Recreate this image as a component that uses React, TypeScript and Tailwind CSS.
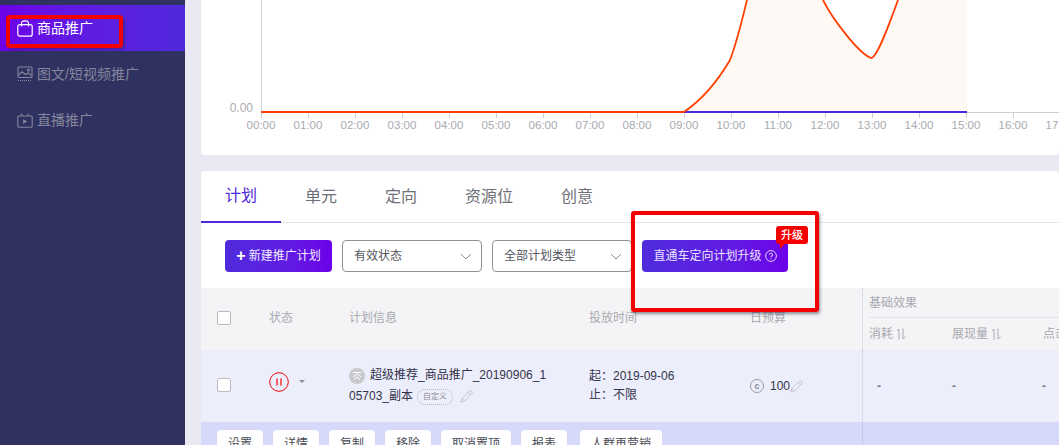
import React from "react";

const hours = Array.from({ length: 19 }, (_, i) => i);

function Chart() {
  return (
    <svg viewBox="201 0 858 155" className="block h-[155px] w-[858px]">
      <path d="M684 112 C700 101 716 84 730 60 C737 42 742 20 747 0 L823 0 C832 18 858 53 871 58 C877 58 889 25 898 0 L967 0 L967 112 Z" fill="#fff9f6" />
      <line x1="261.5" y1="0" x2="261.5" y2="113" stroke="#cfcfd3" />
      <line x1="261" y1="112.5" x2="1059" y2="112.5" stroke="#cfcfd3" />
      {hours.map((h) => (
        <line key={h} x1={261.5 + 47 * h} y1="113" x2={261.5 + 47 * h} y2="118" stroke="#cfcfd3" />
      ))}
      <line x1="261" y1="112" x2="684" y2="112" stroke="#ff4000" strokeWidth="1.8" />
      <line x1="684" y1="112" x2="967" y2="112" stroke="#4f28dc" strokeWidth="1.8" />
      <path d="M684 112 C700 101 716 84 730 60 C737 42 742 20 747 0 M823 0 C832 18 858 53 871 58 C877 58 889 25 898 0" fill="none" stroke="#ff4000" strokeWidth="1.8" />
      <text x="253" y="112" textAnchor="end" fontSize="12" fill="#a9a9b0">0.00</text>
      {hours.map((h) => (
        <text key={h} x={261 + 47 * h} y="129" textAnchor="middle" fontSize="11.5" fill="#a9a9b0">
          {String(h).padStart(2, "0")}:00
        </text>
      ))}
    </svg>
  );
}

function Bag() {
  return (
    <svg width="16" height="17" viewBox="0 0 16 17" fill="none" stroke="#fff" strokeWidth="1.2" className="shrink-0">
      <rect x="0.8" y="4.6" width="14.4" height="11.6" rx="2" />
      <path d="M4.5 6.5V3.4A2.6 2.6 0 0 1 7.1 .8H8.9A2.6 2.6 0 0 1 11.5 3.4V6.5" />
    </svg>
  );
}

function Pic() {
  return (
    <svg width="16" height="16" viewBox="0 0 16 16" fill="none" stroke="#85859c" strokeWidth="1.1" className="shrink-0">
      <rect x="1" y="1" width="14" height="10.5" rx="1" />
      <path d="M1.5 9 5 5.8 8.5 8.5 11 7 14.5 9.5" />
      <circle cx="11.5" cy="4" r="1" />
      <path d="M1 14.5H15" strokeDasharray="1 1" />
    </svg>
  );
}

function Tv() {
  return (
    <svg width="16" height="15" viewBox="0 0 16 15" fill="none" stroke="#85859c" strokeWidth="1.1" className="shrink-0">
      <rect x="0.8" y="3" width="14.4" height="11.2" rx="1" />
      <path d="M4 .5 6 3M12 .5 10 3" />
      <path d="M6.2 6.2V11L10.3 8.6Z" fill="#85859c" stroke="none" />
    </svg>
  );
}

function Pencil({ color = "#c4c4cc" }: { color?: string }) {
  return (
    <svg width="13" height="13" viewBox="0 0 13 13" fill="none" stroke={color} strokeWidth="1" className="shrink-0">
      <path d="M1 12 2 8.4 9 1.4A1.3 1.3 0 0 1 11.6 4L4.6 11Z" />
      <path d="M2 8.4 4.6 11M8 2.5 10.5 5" />
    </svg>
  );
}

function Chevron() {
  return (
    <svg width="12" height="7" viewBox="0 0 12 7" fill="none" stroke="#8a8a95" strokeWidth="1">
      <path d="M1 1 6 6 11 1" />
    </svg>
  );
}

function Sort() {
  return (
    <svg width="10" height="12" viewBox="0 0 10 12" fill="none" stroke="#a9a9b0" strokeWidth="1" className="ml-[3px] shrink-0">
      <path d="M1 3 3 1V11.5M7 .5V11L9.5 8.8" />
    </svg>
  );
}

function SelectBox({ label }: { label: string }) {
  return (
    <div className="flex h-8 w-[140px] items-center justify-between rounded-[4px] border border-[#8f8f9b] pl-[11px] pr-[9px] text-xs text-[#55555f]">
      <span>{label}</span>
      <Chevron />
    </div>
  );
}

function SideItem({ icon, label, active }: { icon: React.ReactNode; label: string; active?: boolean }) {
  return (
    <div className={active ? "flex h-[46px] items-center gap-[4px] bg-gradient-to-r from-[#6c00e8] to-[#5029dc] pl-[17px] text-sm text-white" : "flex h-[46px] items-center gap-[4px] pl-[17px] text-sm text-[#85859c]"}>
      {icon}
      <span>{label}</span>
    </div>
  );
}

const actions = [
  { t: "设置", w: "w-[46px]" },
  { t: "详情", w: "w-[46px]" },
  { t: "复制", w: "w-[46px]" },
  { t: "移除", w: "w-[46px]" },
  { t: "取消置顶", w: "w-[70px]" },
  { t: "报表", w: "w-[46px]" },
  { t: "人群再营销", w: "w-[82px] ml-[3px]" },
];

export default function App() {
  return (
    <div
      className="relative flex h-[445px] w-[1059px] overflow-hidden bg-[#e9e9f3]"
      style={{ fontFamily: '"Liberation Sans", "Noto Sans CJK SC", sans-serif' }}
    >
      <aside className="h-full w-[185px] shrink-0 bg-[#2f3160] pt-[5px]">
        <SideItem active icon={<Bag />} label="商品推广" />
        <SideItem icon={<Pic />} label="图文/短视频推广" />
        <SideItem icon={<Tv />} label="直播推广" />
      </aside>

      <main className="ml-4 flex min-w-0 flex-1 flex-col">
        <section className="h-[155px] shrink-0 rounded-b-[4px] bg-white">
          <Chart />
        </section>

        <section className="mt-4 flex-1 overflow-hidden rounded-t-[4px] bg-white">
          <div className="flex h-[52px] border-b border-[#e4e4ea] text-base text-[#6f6f78]">
            <div className="flex h-[52px] w-20 items-center justify-center border-b-2 border-[#5029dc] text-[#5029dc]">计划</div>
            <div className="flex items-center px-6">单元</div>
            <div className="flex items-center px-6">定向</div>
            <div className="flex items-center px-6">资源位</div>
            <div className="flex items-center px-6">创意</div>
          </div>

          <div className="flex h-[65px] items-start gap-[10px] pl-6 pt-[17px]">
            <div className="flex h-8 w-[107px] items-center justify-center gap-[3px] rounded-[4px] bg-gradient-to-r from-[#4f2bdc] to-[#6c00e8] text-xs text-[#f0ecff]">
              <span className="text-base font-bold leading-none text-white">+</span>
              <span>新建推广计划</span>
            </div>
            <SelectBox label="有效状态" />
            <SelectBox label="全部计划类型" />
            <div className="relative flex h-8 w-[146px] items-center justify-center gap-[3px] rounded-[4px] bg-gradient-to-r from-[#4f2bdc] to-[#6c00e8] text-xs text-[#e9e4ff]">
              <span>直通车定向计划升级</span>
              <svg width="12" height="12" viewBox="0 0 12 12" fill="none" stroke="#e9e4ff" strokeWidth="0.9">
                <circle cx="6" cy="6" r="5.4" />
                <path d="M4.4 4.7A1.6 1.6 0 1 1 6 6.4V7.4M6 8.5V9.4" />
              </svg>
              <div className="absolute left-[134px] top-[-14px] flex h-[18px] w-8 items-center justify-center rounded-[3px] bg-[#f50000] text-[11px] font-medium text-white">
                升级
                <span className="absolute left-[4px] top-[17px] h-0 w-0 border-r-[6px] border-t-[6px] border-r-transparent border-t-[#f50000]" />
              </div>
            </div>
          </div>

          <div className="flex h-[62px] bg-[#f4f4f6] text-xs text-[#a9a9b0]">
            <div className="flex w-[661px] shrink-0 items-center pb-[2px] pl-4">
              <span className="h-[14px] w-[14px] rounded-[2px] border border-[#b9b9c0] bg-white" />
              <span className="ml-[38px] w-20">状态</span>
              <span className="w-60">计划信息</span>
              <span className="w-[161px]">投放时间</span>
              <span>日预算</span>
            </div>
            <div className="flex-1 border-l border-dotted border-[#c9c9dc] pl-[6px]">
              <div className="flex h-[30px] items-center border-b border-[#e2e2ea]">基础效果</div>
              <div className="flex h-[31px] items-center whitespace-nowrap">
                <span className="flex w-[83px] shrink-0 items-center">消耗<Sort /></span>
                <span className="flex w-[91px] shrink-0 items-center">展现量<Sort /></span>
                <span className="shrink-0">点击</span>
              </div>
            </div>
          </div>

          <div className="flex h-[72px] bg-[#edeefc] text-xs text-[#33334a]">
            <div className="flex w-[661px] shrink-0 items-center pl-4">
              <span className="mb-[2px] h-[14px] w-[14px] rounded-[2px] border border-[#b9b9c0] bg-white" />
              <div className="mb-[9px] ml-[38px] flex w-20 items-center">
                <svg width="20" height="20" viewBox="0 0 20 20" fill="none" stroke="#f50000">
                  <circle cx="10" cy="10" r="9.3" strokeWidth="1" />
                  <path d="M8 6.5V13.5M12 6.5V13.5" strokeWidth="1.2" />
                </svg>
                <span className="ml-[10px] h-0 w-0 border-x-[3px] border-t-[3px] border-x-transparent border-t-[#8a8a95]" />
              </div>
              <div className="w-60 pr-[52px] leading-[21px]">
                <div className="flex items-center">
                  <svg width="16" height="16" viewBox="0 0 16 16" className="mr-[5px] shrink-0">
                    <circle cx="8" cy="8" r="8" fill="#c9c9cd" />
                    <path d="M3.5 4.5H12.5M4 9 8 5.8 12 9M5 11.5 8 9 11 11.5" stroke="#fff" strokeWidth="1" fill="none" />
                  </svg>
                  <span className="whitespace-nowrap">超级推荐_商品推广_20190906_1</span>
                </div>
                <div className="flex items-center">
                  <span>05703_副本</span>
                  <span className="ml-1 flex h-4 items-center rounded-full border border-dotted border-[#b5b5bd] px-[5px] text-[8px] text-[#8f8f99]">自定义</span>
                  <span className="ml-[7px]"><Pencil /></span>
                </div>
              </div>
              <div className="w-[161px] leading-[19px]">
                <div>起：2019-09-06</div>
                <div>止：不限</div>
              </div>
              <div className="flex items-center">
                <span className="flex h-[14px] w-[14px] items-center justify-center rounded-full border border-[#9a9aa5] text-[9px] font-bold leading-none text-[#8a8a95]">c</span>
                <span className="ml-[6px]">100</span>
                <Pencil />
              </div>
            </div>
            <div className="flex flex-1 items-center border-l border-dotted border-[#c9c9dc] pl-[14px] font-bold text-[#77777f]">
              <span className="w-[75px]">-</span>
              <span className="w-[90px]">-</span>
              <span>-</span>
            </div>
          </div>

          <div className="flex h-[23px] bg-[#d6d9fa]">
            <div className="flex w-[661px] shrink-0 gap-[10px] pl-4 pt-2">
              {actions.map((a) => (
                <div key={a.t} className={`${a.w} flex h-7 shrink-0 items-center justify-center rounded-[4px] bg-white text-xs text-[#4a4a55]`}>
                  {a.t}
                </div>
              ))}
            </div>
            <div className="flex-1 border-l border-dotted border-[#b9b9dc]" />
          </div>
        </section>
      </main>

      <div className="absolute left-[6px] top-[15px] h-[33px] w-[117px] rounded-[4px] border-4 border-[#f50000] shadow-[2px_2px_2px_rgba(40,40,80,0.45)]" />
      <div className="absolute left-[631px] top-[211px] h-[101px] w-[188px] rounded-[3px] border-4 border-[#f50000] shadow-[1px_2px_3px_rgba(40,40,60,0.5)]" />
    </div>
  );
}
